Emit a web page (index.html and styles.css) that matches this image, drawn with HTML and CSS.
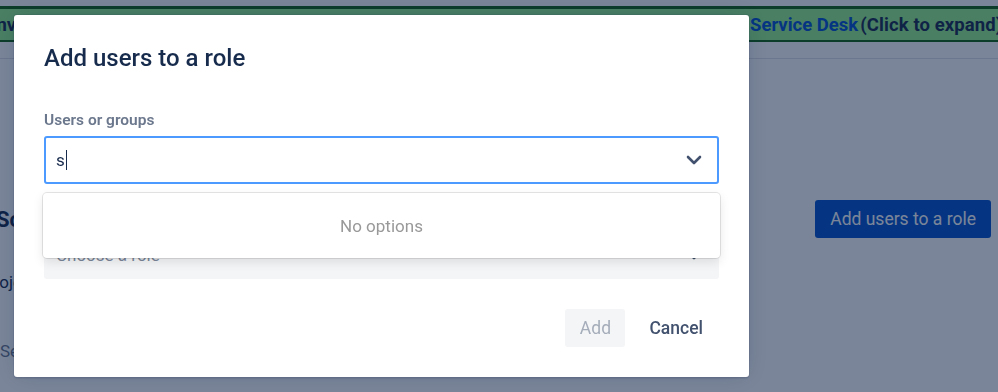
FILE: index.html
```html
<!DOCTYPE html>
<html lang="en">
  <head>
    <meta charset="UTF-8" />
    <meta name="viewport" content="width=device-width, initial-scale=1.0" />
    <title>Add users to a role</title>
    <link rel="stylesheet" href="styles.css">
  </head>
  <body>
    <div class="page">
      <div class="banner">
        <span class="banner-lead">Environment notice: this is a test instance, please contact</span>
        <a class="banner-link">Service Desk</a>
        <span class="banner-tail">(Click to expand)</span>
      </div>
      <div class="subnav"></div>
      <div class="content">
        <div class="content-head">
          <h2 class="content-title">Scheme roles</h2>
          <button class="btn-primary">Add users to a role</button>
        </div>
        <p class="content-text">Project roles and the people in them</p>
        <div class="content-search">Search</div>
      </div>
    </div>

    <div class="blanket"></div>

    <div class="modal">
      <h1 class="modal-title">Add users to a role</h1>

      <div class="field">
        <label class="field-label">Users or groups</label>
        <div class="select select-focus">
          <span class="select-value">s</span><span class="caret"></span>
          <svg class="chevron" width="16" height="10" viewBox="0 0 16 10">
            <polyline points="2,2 8,8 14,2" />
          </svg>
          <div class="menu">
            <div class="menu-notice">No options</div>
          </div>
        </div>
      </div>

      <div class="field field-second">
        <label class="field-label">Role</label>
        <div class="select select-subtle">
          <span class="select-placeholder">Choose a role</span>
          <svg class="chevron" width="16" height="10" viewBox="0 0 16 10">
            <polyline points="2,2 8,8 14,2" />
          </svg>
        </div>
      </div>

      <div class="modal-footer">
        <button class="btn btn-disabled">Add</button>
        <button class="btn btn-subtle">Cancel</button>
      </div>
    </div>
  </body>
</html>
```

FILE: styles.css
```css
*{
    padding: 0;
    margin: 0;
    box-sizing: border-box;
}
body{
    font-family: Roboto, "Liberation Sans", Arial, sans-serif;
    color: #172b4d;
    background-color: white;
    overflow: hidden;
}
button{
    font-family: inherit;
    border: none;
    cursor: pointer;
}

/* page behind the dialog */
.page{
    height: 392px;
    padding-top: 6px;
}
.banner{
    display: flex;
    align-items: center;
    height: 36px;
    background-color: #96f18a;
    border-top: 3px solid #11620e;
    border-bottom: 2px solid #11620e;
    font-size: 18.5px;
    font-weight: bold;
    white-space: nowrap;
    overflow: hidden;
}
.banner-lead{
    flex: 0 0 764px;
    margin-left: -14px;
    overflow: hidden;
    direction: rtl;
    text-align: left;
}
.banner-link{
    color: #0052cc;
}
.banner-tail{
    margin-left: 2px;
    letter-spacing: 0.1px;
}
.subnav{
    height: 17px;
    border-bottom: 1px solid #dfe1e6;
}
.content{
    padding-right: 7px;
}
.content-head{
    display: flex;
    justify-content: space-between;
    align-items: center;
    margin-top: 141px;
}
.content-title{
    font-size: 22px;
    margin-left: -4px;
}
.btn-primary{
    height: 38px;
    padding: 0 15px;
    border-radius: 3px;
    background-color: #0052cc;
    color: white;
    font-size: 17.5px;
}
.content-text{
    margin-top: 34px;
    margin-left: -17px;
    font-size: 17px;
}
.content-search{
    margin-top: 37px;
    height: 62px;
    padding-top: 12px;
    color: #6b778c;
    font-size: 17px;
}

.blanket{
    position: fixed;
    inset: 0;
    background-color: rgba(9, 30, 66, 0.54);
}

/* dialog */
.modal{
    position: fixed;
    left: 14px;
    top: 15px;
    width: 735px;
    display: flex;
    flex-direction: column;
    padding: 29px 30px 30px 30px;
    background-color: white;
    border-radius: 3px;
    box-shadow: 0 0 0 1px rgba(9, 30, 66, 0.08), 0 2px 1px rgba(9, 30, 66, 0.08), 0 0 20px -6px rgba(9, 30, 66, 0.31);
}
.modal-title{
    font-size: 24px;
    line-height: 28px;
    font-weight: 500;
    color: #172b4d;
}
.field{
    margin-top: 40px;
}
.field-second{
    margin-top: 23px;
}
.field-label{
    display: block;
    font-size: 15.5px;
    line-height: 16px;
    font-weight: 600;
    color: #6b778c;
    margin-bottom: 8px;
}
.select{
    position: relative;
    display: flex;
    align-items: center;
    height: 48px;
    padding: 0 12px;
    border-radius: 3px;
    font-size: 17px;
}
.select-focus{
    border: 2px solid #4c9aff;
    padding-left: 10px;
}
.select-subtle{
    background-color: #f4f5f7;
}
.select-value{
    color: #172b4d;
}
.caret{
    width: 1px;
    height: 20px;
    margin-left: 1px;
    background-color: #172b4d;
}
.select-placeholder{
    color: #7a869a;
}
.chevron{
    margin-left: auto;
    margin-right: 3px;
}
.select-subtle .chevron{
    margin-right: 5px;
}
.chevron polyline{
    fill: none;
    stroke: #42526e;
    stroke-width: 2.6;
    stroke-linecap: round;
    stroke-linejoin: round;
}
.menu{
    position: absolute;
    top: calc(100% + 11px);
    left: -3px;
    right: -3px;
    height: 65px;
    display: flex;
    align-items: center;
    justify-content: center;
    background-color: white;
    border-radius: 4px;
    box-shadow: 0 0 0 1px rgba(0, 0, 0, 0.1), 0 4px 11px rgba(0, 0, 0, 0.1);
    z-index: 2;
}
.menu-notice{
    color: #999999;
    font-size: 17px;
}
.modal-footer{
    display: flex;
    justify-content: flex-end;
    gap: 11px;
    margin-top: 30px;
    padding-right: 3px;
}
.btn{
    height: 38px;
    padding: 0 13px;
    border-radius: 3px;
    font-size: 17.5px;
    font-weight: 500;
}
.btn-disabled{
    width: 60px;
    background-color: #f4f5f7;
    color: #a5adba;
    font-weight: normal;
    cursor: not-allowed;
}
.btn-subtle{
    background-color: transparent;
    color: #42526e;
}
```
